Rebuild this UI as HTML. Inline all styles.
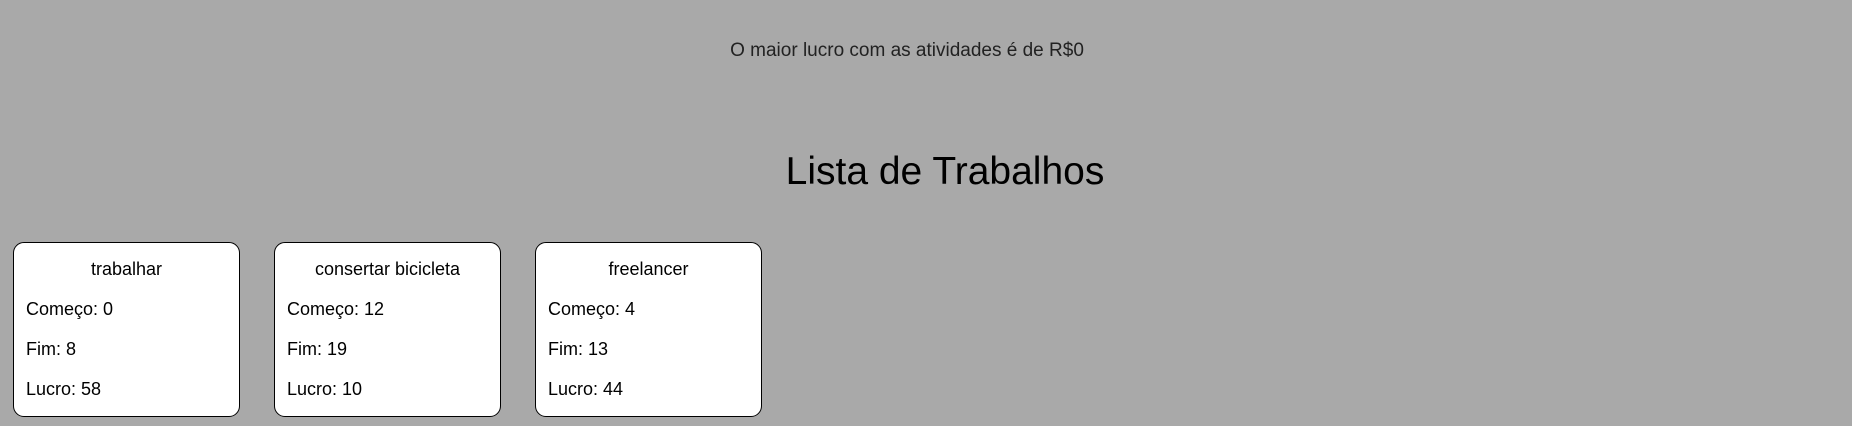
<!DOCTYPE html>
<html><head><meta charset="utf-8"><style>
body{margin:0;width:1852px;height:426px;background:#a9a9a9;font-family:"Liberation Sans",sans-serif;position:relative;overflow:hidden;color:#000}
.top{position:absolute;left:707px;width:400px;top:40px;text-align:center;font-size:19px;color:#222;white-space:nowrap}
h1{position:absolute;left:745px;width:400px;top:150px;margin:0;text-align:center;font-size:39px;font-weight:normal;white-space:nowrap}
.card{position:absolute;top:242px;width:225px;height:173px;background:#fff;border:1px solid #000;border-radius:11px;font-size:18px}
.card div{position:absolute;left:12px;white-space:nowrap}
.card .t{left:0;width:100%;text-align:center;top:16px}
</style></head><body>
<div class="top">O maior lucro com as atividades é de R$0</div>
<h1>Lista de Trabalhos</h1>
<div class="card" style="left:13px"><div class="t">trabalhar</div><div style="top:56px">Começo: 0</div><div style="top:96px">Fim: 8</div><div style="top:136px">Lucro: 58</div></div>
<div class="card" style="left:274px"><div class="t">consertar bicicleta</div><div style="top:56px">Começo: 12</div><div style="top:96px">Fim: 19</div><div style="top:136px">Lucro: 10</div></div>
<div class="card" style="left:535px"><div class="t">freelancer</div><div style="top:56px">Começo: 4</div><div style="top:96px">Fim: 13</div><div style="top:136px">Lucro: 44</div></div>
</body></html>
